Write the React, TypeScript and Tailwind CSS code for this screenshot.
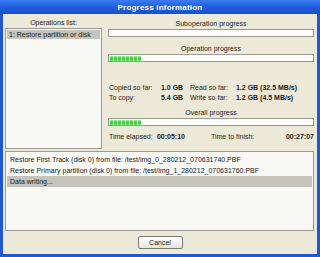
import React from 'react';

const font = { fontFamily: '"Liberation Sans", Arial, sans-serif' };

const Bar: React.FC<{ blocks: number }> = ({ blocks }) => (
  <div className="h-[8px] w-full border border-[#9c9a94] bg-[#fbfbf8] flex items-center gap-[1px] px-[1px]">
    {Array.from({ length: blocks }).map((_, i) => (
      <div key={i} className="h-[5px] w-[3px] bg-gradient-to-b from-[#a6f0a0] via-[#2fc62a] to-[#6ee06a]" />
    ))}
  </div>
);

const Stat: React.FC<{ label: string; value: string; lw: string }> = ({ label, value, lw }) => (
  <div className="flex whitespace-nowrap">
    <span className={`${lw} text-[#222]`}>{label}</span>
    <span className="font-bold text-[#222]">{value}</span>
  </div>
);

export default function App() {
  return (
    <div className="w-[320px] h-[257px] bg-[#1e56d6] flex flex-col text-[7px] leading-[9px]" style={font}>
      <div className="h-[14px] flex items-center justify-center bg-gradient-to-b from-[#3b7cf0] via-[#1f5fe0] to-[#1a4fc8]">
        <span className="text-white font-bold text-[8px] tracking-[0.2px]">Progress information</span>
      </div>
      <div className="flex-1 mx-[3px] mb-[3px] bg-[#ece9d8] flex flex-col px-[2px] pt-[3px]">
        <div className="flex gap-[6px] h-[132px]">
          <div className="w-[98px] flex flex-col">
            <div className="h-[11px] flex items-center justify-center text-[#222]">Operations list:</div>
            <div className="flex-1 border border-[#9c9a94] bg-[#f8f8f4] p-[1px]">
              <div className="bg-[#c4c3bc] h-[9px] pl-[2px] flex items-center text-[#222] whitespace-nowrap">1: Restore partition or disk</div>
            </div>
          </div>
          <div className="flex-1 flex flex-col pr-[1px]">
            <div className="h-[12px] flex items-center justify-center text-[#222]">Suboperation progress</div>
            <Bar blocks={0} />
            <div className="h-[17px] flex items-end justify-center pb-[1px] text-[#222]">Operation progress</div>
            <Bar blocks={8} />
            <div className="mt-[21px] flex flex-col gap-[1px] pl-[1px]">
              <div className="flex">
                <div className="w-[81px]"><Stat label="Copied so far:" value="1.0 GB" lw="w-[52px]" /></div>
                <Stat label="Read so far:" value="1.2 GB (32.5 MB/s)" lw="w-[46px]" />
              </div>
              <div className="flex">
                <div className="w-[81px]"><Stat label="To copy:" value="5.4 GB" lw="w-[52px]" /></div>
                <Stat label="Write so far:" value="1.2 GB (4.5 MB/s)" lw="w-[46px]" />
              </div>
            </div>
            <div className="h-[16px] flex items-end justify-center pb-[1px] text-[#222]">Overall progress</div>
            <Bar blocks={8} />
            <div className="mt-[6px] flex pl-[1px] whitespace-nowrap">
              <span className="w-[48px] text-[#222]">Time elapsed:</span>
              <span className="w-[54px] font-bold text-[#222]">00:05:10</span>
              <span className="w-[75px] text-[#222]">Time to finish:</span>
              <span className="font-bold text-[#222]">00:27:07</span>
            </div>
          </div>
        </div>
        <div className="mt-[2px] h-[80px] mr-[1px] border border-[#9c9a94] bg-[#f8f8f4] p-[1px] pt-[2px] flex flex-col text-[#222] whitespace-nowrap">
          <div className="h-[11px] pl-[3px] flex items-center">Restore First Track (disk 0) from file: /test/img_0_280212_070631740.PBF</div>
          <div className="h-[11px] pl-[3px] flex items-center">Restore Primary partition (disk 0) from file: /test/img_1_280212_070631760.PBF</div>
          <div className="h-[11px] pl-[3px] flex items-center bg-[#c4c3bc]">Data writing...</div>
        </div>
        <div className="flex-1 flex items-center justify-center">
          <button className="w-[45px] h-[13px] border border-[#7a7a72] rounded-[2px] bg-gradient-to-b from-[#ffffff] to-[#e6e4dc] text-[#222] text-[7px] leading-[9px]" style={font}>
            Cancel
          </button>
        </div>
      </div>
    </div>
  );
}
